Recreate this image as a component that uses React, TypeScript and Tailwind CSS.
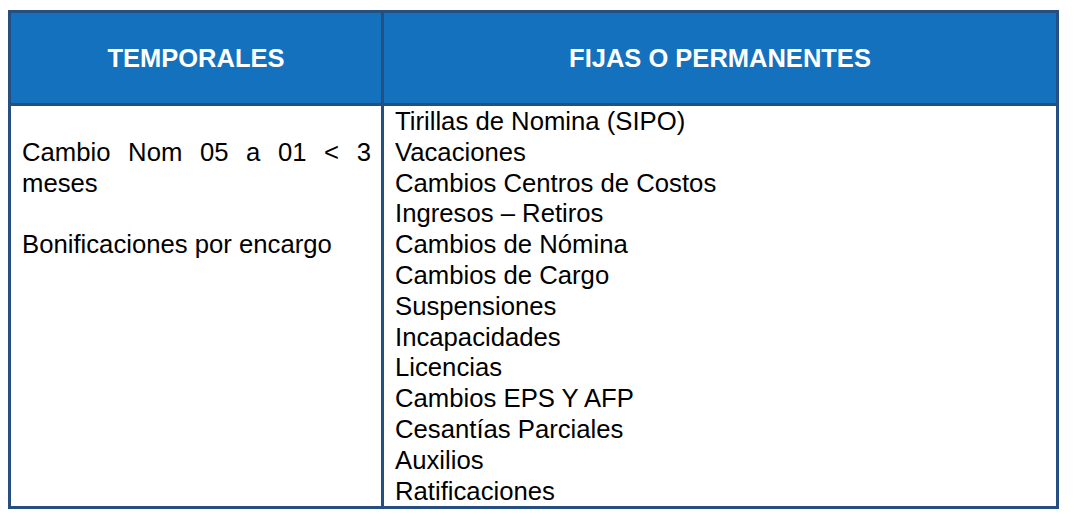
const fijas = [
  "Tirillas de Nomina (SIPO)",
  "Vacaciones",
  "Cambios Centros de Costos",
  "Ingresos – Retiros",
  "Cambios de Nómina",
  "Cambios de Cargo",
  "Suspensiones",
  "Incapacidades",
  "Licencias",
  "Cambios EPS Y AFP",
  "Cesantías Parciales",
  "Auxilios",
  "Ratificaciones",
];

export default function App() {
  return (
    <main
      className="min-h-screen bg-white pl-[8px] pt-[10px]"
      style={{ fontFamily: '"Liberation Sans", Arial, sans-serif' }}
    >
      <div className="w-[1051px] border-[3px] border-[#264f81] grid grid-cols-[373px_1fr]">
        <div className="h-[93px] bg-[#1371bd] border-r-[3px] border-b-[3px] border-[#264f81] flex items-center justify-center">
          <span className="text-white font-bold text-[25.5px]">TEMPORALES</span>
        </div>
        <div className="h-[93px] bg-[#1371bd] border-b-[3px] border-[#264f81] flex items-center justify-center">
          <span className="text-white font-bold text-[25.5px]">FIJAS O PERMANENTES</span>
        </div>

        <div className="border-r-[3px] border-[#264f81] pl-[11px] pr-[10px] text-[25.7px] leading-[30.8px] text-black">
          <div className="h-[30.8px]" />
          <p className="text-justify">Cambio Nom 05 a 01 &lt; 3 meses</p>
          <div className="h-[30.8px]" />
          <p>Bonificaciones por encargo</p>
        </div>
        <div className="pl-[11px] pr-[12px] text-[25.7px] leading-[30.8px] text-black">
          {fijas.map((f) => (
            <div key={f}>{f}</div>
          ))}
        </div>
      </div>
    </main>
  );
}
